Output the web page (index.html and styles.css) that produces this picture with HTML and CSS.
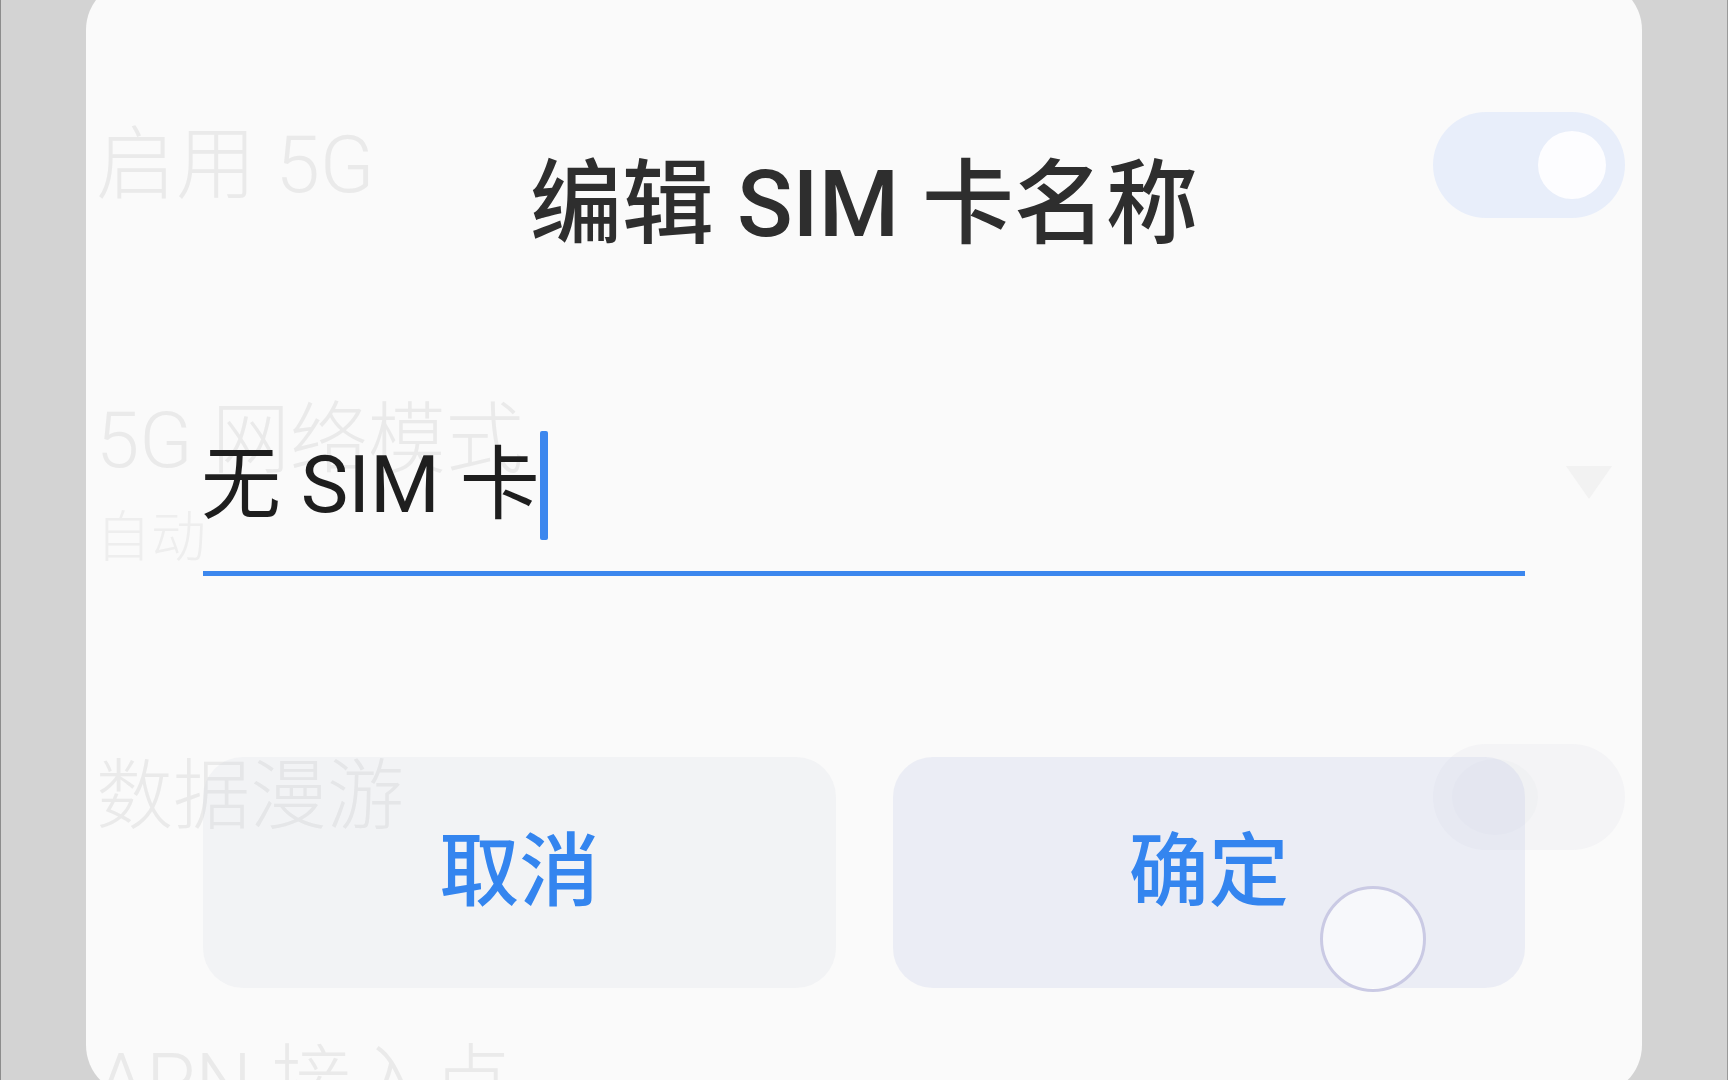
FILE: index.html
```html
<!DOCTYPE html>
<html lang="zh-CN">

<head>
    <meta charset="UTF-8">
    <meta name="viewport" content="width=device-width, initial-scale=1.0">
    <title>编辑 SIM 卡名称</title>
    <link rel="stylesheet" href="styles.css">
</head>

<body>
    <div class="screen">
        <div class="dialog">
            <!-- settings page showing through the dialog -->
            <div class="ghost" aria-hidden="true">
                <div class="ghost-row row-enable">
                    <span class="ghost-label">启用 5G</span>
                    <span class="switch switch-on"><span class="knob"></span></span>
                </div>
                <div class="ghost-row row-mode">
                    <div>
                        <div class="ghost-label">5G 网络模式</div>
                        <div class="ghost-sub">自动</div>
                    </div>
                    <span class="arrow"></span>
                </div>
                <div class="ghost-row row-roaming">
                    <span class="ghost-label">数据漫游</span>
                    <span class="switch switch-off"><span class="knob"></span></span>
                </div>
                <div class="ghost-row row-apn">
                    <span class="ghost-label">APN 接入点</span>
                </div>
            </div>

            <div class="dialog-body">
                <h1 class="dialog-title">编辑 SIM 卡名称</h1>
                <div class="name-field">
                    <span class="name-value">无 SIM 卡</span>
                    <span class="caret"></span>
                </div>
                <div class="actions">
                    <button type="button" class="btn btn-cancel">取消</button>
                    <button type="button" class="btn btn-ok">确定</button>
                </div>
            </div>

            <span class="touch"></span>
        </div>
    </div>
</body>

</html>
```

FILE: styles.css
```css
body {
    margin: 0;
    font-family: Roboto, "Noto Sans CJK SC", sans-serif;
}

.screen {
    box-sizing: border-box;
    width: 1728px;
    height: 1080px;
    overflow: hidden;
    background-color: #d3d3d3;
    border-left: 1px solid #8c8c8c;
    border-right: 1px solid #9a9a9a;
}

.dialog {
    position: relative;
    height: 1115px;
    margin: -20px 85px 0 85px;
    border-radius: 50px;
    background-color: #fafafa;
    overflow: hidden;
}

/* faded list behind */
.ghost {
    position: absolute;
    top: 0;
    left: 10px;
    right: 17px;
    padding-top: 135px;
    color: #eaeaea;
    font-weight: 300;
}

.ghost-row {
    display: flex;
    align-items: center;
    justify-content: space-between;
}

.ghost-label {
    font-size: 80px;
    line-height: 90px;
}

.ghost-sub {
    font-size: 55px;
    line-height: 70px;
    margin-top: 16px;
    color: #eeeeee;
}

.row-enable {
    height: 100px;
}

.row-mode {
    margin-top: 181px;
    height: 176px;
}

.row-mode .ghost-label {
    font-size: 78px;
}

.row-roaming {
    margin-top: 170px;
    height: 110px;
}

.row-roaming .ghost-label {
    font-size: 77px;
}

.row-apn {
    margin-top: 186px;
    height: 90px;
}

.switch {
    display: flex;
    align-items: center;
    box-sizing: border-box;
    width: 192px;
    height: 106px;
    padding: 0 19px;
    border-radius: 53px;
}

.switch-on {
    justify-content: flex-end;
    background-color: #e8eefa;
}

.switch-off {
    justify-content: flex-start;
    background-color: #f4f4f6;
}

.knob {
    width: 68px;
    height: 68px;
    border-radius: 50%;
    background-color: #fdfdff;
}

.switch-off .knob {
    width: 86px;
    height: 76px;
    background-color: #f0f1f3;
}

.arrow {
    width: 0;
    height: 0;
    margin-right: 13px;
    margin-bottom: 4px;
    border-left: 23px solid transparent;
    border-right: 23px solid transparent;
    border-top: 33px solid #f2f2f2;
}

/* dialog content */
.dialog-body {
    position: relative;
    padding: 170px 117px 0 117px;
}

.dialog-title {
    margin: 0;
    font-size: 92px;
    line-height: 110px;
    font-weight: 500;
    text-align: center;
    color: #2e2e2e;
}

.name-field {
    display: flex;
    align-items: center;
    height: 100px;
    margin-top: 175px;
    padding-bottom: 36px;
    border-bottom: 5px solid #3c87ee;
}

.name-value {
    margin-left: -2px;
    font-size: 80px;
    line-height: 100px;
    color: #1e1e1e;
}

.caret {
    width: 8px;
    height: 109px;
    margin-left: 0;
    border-radius: 2px;
    background-color: #3c87ee;
}

.actions {
    display: grid;
    grid-template-columns: 1fr 1fr;
    gap: 57px;
    margin-top: 181px;
}

.btn {
    height: 231px;
    padding-bottom: 18px;
    border: none;
    border-radius: 40px;
    font-family: Roboto, "Noto Sans CJK SC", sans-serif;
    font-size: 80px;
    font-weight: 500;
    color: #3485ef;
}

.btn-cancel {
    background-color: rgba(200, 205, 220, 0.15);
}

.btn-ok {
    background-color: rgba(190, 200, 230, 0.25);
}

/* finger touch marker */
.touch {
    position: absolute;
    left: 1234px;
    top: 906px;
    box-sizing: border-box;
    width: 106px;
    height: 106px;
    border: 3px solid #cacae4;
    border-radius: 50%;
    background-color: rgba(255, 255, 255, 0.6);
}
```
